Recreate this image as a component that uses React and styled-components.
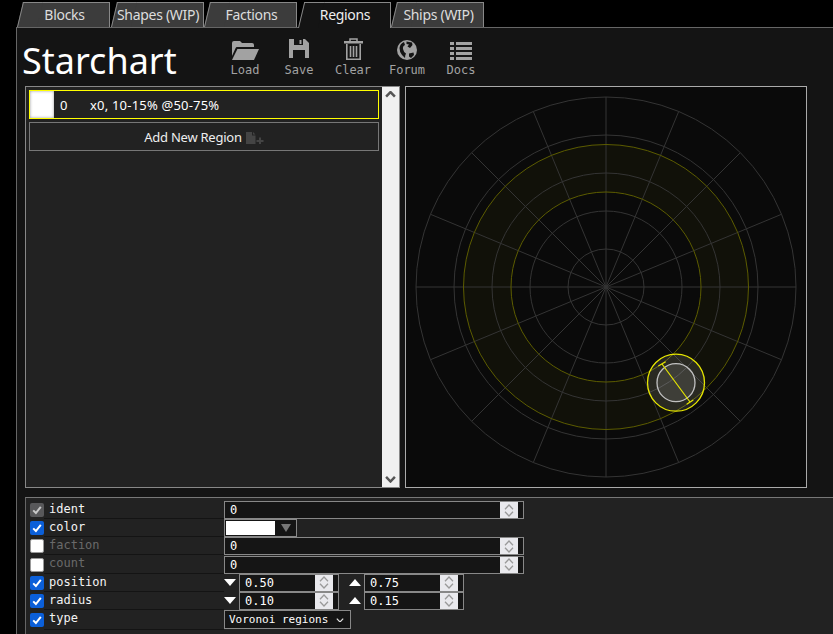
import React from "react";
import styled, { createGlobalStyle } from "styled-components";

const GlobalStyle = createGlobalStyle`
  html, body { margin: 0; padding: 0; background: #000; overflow: hidden; }
  body { font-family: "Noto Sans", "Open Sans", sans-serif; }
`;

const MONO = `"DejaVu Sans Mono", "Liberation Mono", monospace`;

const Page = styled.div`
  width: 833px;
  height: 634px;
  overflow: hidden;
  background: #000;
`;

const TabBar = styled.div`
  display: flex;
  height: 27px;
  padding: 2px 0 0 16.5px;
  box-sizing: border-box;
`;

const Tab = styled.div`
  position: relative;
  isolation: isolate;
  width: 87px;
  height: ${(p) => (p.$active ? "26px" : "25px")};
  margin-left: 6.5px;
  padding-right: 3px;
  box-sizing: border-box;
  border-top: 1px solid #888;
  border-right: 1px solid #888;
  background: ${(p) => (p.$active ? "#141414" : "#3c3c3c")};
  color: ${(p) => (p.$active ? "#eee" : "#ddd")};
  font-size: 14px;
  letter-spacing: -0.3px;
  line-height: 24px;
  text-align: center;
  white-space: nowrap;
  z-index: ${(p) => (p.$active ? 2 : 0)};

  &::before {
    content: "";
    position: absolute;
    z-index: -1;
    top: -1px;
    bottom: 0;
    left: -6px;
    width: 20px;
    box-sizing: border-box;
    border-top: 1px solid #888;
    border-left: 1px solid #888;
    background: inherit;
    transform-origin: bottom left;
    transform: skewX(-13.5deg);
  }
`;

const Frame = styled.div`
  position: relative;
  height: 607px;
  margin-left: 16px;
  box-sizing: border-box;
  border-top: 1px solid #666;
  border-left: 1px solid #666;
  background: #141414;
`;

const Header = styled.div`
  display: flex;
  height: 58px;
  padding-left: 5px;
`;

const Title = styled.h1`
  width: 196px;
  margin: 0;
  color: #fff;
  font-size: 36px;
  font-weight: 400;
  line-height: 66px;
`;

const Toolbar = styled.div`
  display: flex;
  padding-top: 9px;
`;

const ToolButton = styled.div`
  width: 54px;
  display: flex;
  flex-direction: column;
  align-items: center;
  color: #a2a2a2;
  font-family: ${MONO};
  font-size: 12px;
  line-height: 14px;
`;

const IconSlot = styled.div`
  height: 23px;
  margin-bottom: 3px;
  display: flex;
  align-items: flex-end;

  svg { display: block; }
`;

const Main = styled.div`
  display: flex;
  gap: 5px;
  padding-left: 8px;
`;

const ListPanel = styled.div`
  width: 375px;
  height: 402px;
  box-sizing: border-box;
  display: flex;
  border: 1px solid #888;
  background: #222;
`;

const List = styled.div`
  flex: 1;
  display: flex;
  flex-direction: column;
  gap: 3px;
  padding: 3px 3px 0 3px;
`;

const RegionRow = styled.div`
  height: 29px;
  box-sizing: border-box;
  display: flex;
  align-items: center;
  border: 1px solid #ff0;
  color: #fff;
  font-size: 13px;
  letter-spacing: 0.2px;
`;

const Swatch = styled.div`
  width: 24px;
  height: 100%;
  background: #fff;
  box-shadow: inset 0 0 3px #999;
`;

const RegionIdent = styled.span`
  width: 36px;
  padding-left: 6px;
  box-sizing: border-box;
`;

const AddButton = styled.div`
  height: 29px;
  box-sizing: border-box;
  display: flex;
  align-items: center;
  justify-content: center;
  gap: 4px;
  border: 1px solid #777;
  color: #eee;
  font-size: 13px;
  letter-spacing: -0.25px;
`;

const Scrollbar = styled.div`
  width: 17px;
  display: flex;
  flex-direction: column;
  justify-content: space-between;
  align-items: center;
  padding: 4px 0;
  box-sizing: border-box;
  background: #f0f0f0;
`;

const ChartBox = styled.div`
  width: 402px;
  height: 402px;
  box-sizing: border-box;
  border: 1px solid #aaa;
  background: #0a0a0a;

  svg { display: block; }
`;

const PropPanel = styled.div`
  height: 138px;
  margin: 9px 0 0 8px;
  box-sizing: border-box;
  border-top: 1px solid #777;
  border-left: 1px solid #666;
  background: #222;
`;

const PropList = styled.div`
  width: 498px;
  padding: 3px 0 4px;
  border-bottom: 1px solid #333;
`;

const PropRow = styled.div`
  display: flex;
  align-items: center;
  height: ${(p) => (p.$tall ? "20px" : "18.17px")};
`;

const Check = styled.span`
  flex: none;
  width: 14px;
  height: 14px;
  margin-left: 4px;
  box-sizing: border-box;
  border-radius: 2px;
  display: flex;
  align-items: center;
  justify-content: center;
  background: ${(p) =>
    p.$state === "on" ? "#0b5fd9" : p.$state === "locked" ? "#58585a" : "#fff"};
  border: ${(p) => (p.$state === "off" ? "1px solid #999" : "none")};
  color: ${(p) => (p.$state === "locked" ? "#c8c8c8" : "#fff")};
`;

const Label = styled.div`
  flex: none;
  width: 180px;
  height: 100%;
  padding-left: 5px;
  box-sizing: border-box;
  border-bottom: 1px solid #141414;
  color: ${(p) => (p.$off ? "#6a6a6a" : "#f4f4f4")};
  font-family: ${MONO};
  font-size: 12px;
  line-height: 17px;
`;

const Field = styled.div`
  flex: none;
  width: ${(p) => p.$width}px;
  height: 18px;
  box-sizing: border-box;
  display: flex;
  border: 1px solid #888;
  background: #151515;
  padding-right: 5px;
`;

const FieldInput = styled.input`
  flex: 1;
  min-width: 0;
  padding: 0 0 0 5px;
  border: none;
  outline: none;
  background: transparent;
  color: #fff;
  font-family: ${MONO};
  font-size: 12px;
`;

const Spinner = styled.div`
  flex: none;
  width: 18px;
  display: flex;
  flex-direction: column;
  align-items: center;
  justify-content: center;
  gap: 1px;
  background: #e9e9ed;
`;

const RangeRow = styled.div`
  display: flex;
  align-items: center;
`;

const Arrow = styled.span`
  flex: none;
  width: 0;
  height: 0;
  margin-left: ${(p) => (p.$up ? "10px" : "0")};
  margin-right: 3px;
  border-left: 6px solid transparent;
  border-right: 6px solid transparent;
  border-top: ${(p) => (p.$up ? "none" : "7px solid #fff")};
  border-bottom: ${(p) => (p.$up ? "7px solid #fff" : "none")};
`;

const ColorField = styled.div`
  flex: none;
  width: 73px;
  height: 18px;
  box-sizing: border-box;
  display: flex;
  border: 1px solid #888;
  background: #151515;
`;

const ColorChip = styled.div`
  width: 49px;
  margin: 1px;
  background: #fff;
`;

const ColorCaret = styled.div`
  flex: 1;
  display: flex;
  align-items: center;
  justify-content: center;

  &::before {
    content: "";
    border-left: 5px solid transparent;
    border-right: 5px solid transparent;
    border-top: 8px solid #777;
  }
`;

const SelectBox = styled.div`
  flex: none;
  width: 127px;
  height: 19px;
  box-sizing: border-box;
  display: flex;
  align-items: center;
  justify-content: space-between;
  padding: 0 6px 0 4px;
  border: 1px solid #888;
  background: #151515;
  color: #fff;
  font-family: ${MONO};
  font-size: 11px;
`;

const Chevron = ({ dir = "up", w = 8, color = "#999", sw = 1 }) => (
  <svg width={w} height={w * 0.6} viewBox="0 0 10 6" style={{ display: "block" }}>
    <path
      d={dir === "up" ? "M1 5.2 L5 1 L9 5.2" : "M1 .8 L5 5 L9 .8"}
      fill="none"
      stroke={color}
      strokeWidth={sw * 1.25}
    />
  </svg>
);

const SpinField = ({ width, value }) => (
  <Field $width={width}>
    <FieldInput defaultValue={value} readOnly />
    <Spinner>
      <Chevron dir="up" w={10} />
      <Chevron dir="down" w={10} />
    </Spinner>
  </Field>
);

const CheckBox = ({ state }) => (
  <Check $state={state}>
    {state !== "off" && (
      <svg width="10" height="10" viewBox="0 0 10 10">
        <path d="M1.2 5.4 L3.9 8 L8.8 1.8" fill="none" stroke="currentColor" strokeWidth="2" />
      </svg>
    )}
  </Check>
);

const LoadIcon = () => (
  <svg viewBox="0 0 27 19" width="27" height="19">
    <path fill="currentColor" d="M0 15 V2 Q0 0 2 0 H8 L10 2 H20 Q22 2 22 4 V6 H5 Q4 6 3.4 7.4z" />
    <path fill="currentColor" d="M5.4 8 H27 L22 19 H0z" />
  </svg>
);

const SaveIcon = () => (
  <svg viewBox="0 0 20 21" width="20" height="21">
    <path
      fill="currentColor"
      fillRule="evenodd"
      d="M0 0 H16 L20 4 V19 H0z M5 0 V6 H14 V0z M4 11 V19 H16 V11z"
    />
    <rect x="10.5" y="1" width="2" height="4" fill="currentColor" />
  </svg>
);

const TrashIcon = () => (
  <svg viewBox="0 0 19 22" width="19" height="22">
    <path fill="none" stroke="currentColor" strokeWidth="1.5" d="M6 3.5 V1 H13 V3.5" />
    <rect x="0" y="3" width="19" height="2.5" fill="currentColor" />
    <path
      fill="none"
      stroke="currentColor"
      strokeWidth="1.6"
      d="M2.8 6 V21.2 H16.2 V6 M6.5 8 V19 M9.5 8 V19 M12.5 8 V19"
    />
  </svg>
);

const GlobeIcon = () => (
  <svg viewBox="0 0 20 20" width="20" height="20">
    <circle cx="10" cy="10" r="10" fill="currentColor" />
    <path fill="#141414" d="M7 2 Q3 3.5 2.5 8 Q2.5 12 5 15 Q7 17 8 18 Q8 15 9 13.5 Q6.5 12 6 9 Q5.5 6 8 5z" />
    <path fill="#141414" d="M9.5 1.5 L15 2.5 L15.5 5 L13 8 L10.5 6.5 L12 4.5 L9.5 4z" />
    <path fill="#141414" d="M12 13.5 L16.5 12.5 L17 15 L14 18 L12 16.5z" />
  </svg>
);

const DocsIcon = () => (
  <svg viewBox="0 0 22 18" width="22" height="18">
    {[0, 5, 10, 15].map((y) => (
      <g key={y} fill="currentColor">
        <rect x="0" y={y} width="4" height="3" />
        <rect x="6" y={y} width="16" height="3" />
      </g>
    ))}
  </svg>
);

const NewFileIcon = () => (
  <svg width="18" height="12" viewBox="0 0 18 12" style={{ display: "block", marginTop: 2 }}>
    <path fill="#444" d="M0 0 H6 V3.5 H9.5 V12 H0z M7 0 L9.5 2.5 H7z" />
    <path fill="#444" d="M13 5.5 H15 V8 H17.5 V10 H15 V12 H13 V10 H10.5 V8 H13z" />
  </svg>
);

const RING_RADII = [38, 76, 114, 152, 190];
const SPOKES = Array.from({ length: 16 }, (_, i) => (i * Math.PI) / 8);

const Chart = () => (
  <svg width="400" height="400" viewBox="0 0 400 400">
    <circle cx="200" cy="200" r="118.75" fill="none" stroke="#ffff00" strokeOpacity="0.032" strokeWidth="47.5" />
    <g fill="none" stroke="#343434">
      {RING_RADII.map((r) => (
        <circle key={r} cx="200" cy="200" r={r} />
      ))}
      {SPOKES.map((a) => (
        <line
          key={a}
          x1="200"
          y1="200"
          x2={200 + 190 * Math.cos(a)}
          y2={200 + 190 * Math.sin(a)}
        />
      ))}
    </g>
    <g fill="none" stroke="#5c5c00">
      <circle cx="200" cy="200" r="95" />
      <circle cx="200" cy="200" r="142.5" />
    </g>
    <circle cx="270" cy="295.7" r="28.5" fill="#fff" fillOpacity="0.1" stroke="#e6e600" strokeWidth="1.3" />
    <circle cx="270" cy="295.7" r="19" fill="#fff" fillOpacity="0.1" stroke="#c0c0c0" strokeWidth="1.3" />
    <g stroke="#e6e600" strokeWidth="1.2">
      <line x1="256" y1="277" x2="284" y2="315" />
      <line x1="252.3" y1="279" x2="259.7" y2="274.7" />
      <line x1="280.7" y1="317.3" x2="287.3" y2="313" />
    </g>
  </svg>
);

const TABS = ["Blocks", "Shapes (WIP)", "Factions", "Regions", "Ships (WIP)"];

const TOOLS = [
  { label: "Load", Icon: LoadIcon },
  { label: "Save", Icon: SaveIcon },
  { label: "Clear", Icon: TrashIcon },
  { label: "Forum", Icon: GlobeIcon },
  { label: "Docs", Icon: DocsIcon },
];

export default function App() {
  return (
    <Page>
      <GlobalStyle />
      <TabBar>
        {TABS.map((t) => (
          <Tab key={t} $active={t === "Regions"}>
            {t}
          </Tab>
        ))}
      </TabBar>
      <Frame>
        <Header>
          <Title>Starchart</Title>
          <Toolbar>
            {TOOLS.map(({ label, Icon }) => (
              <ToolButton key={label}>
                <IconSlot>
                  <Icon />
                </IconSlot>
                {label}
              </ToolButton>
            ))}
          </Toolbar>
        </Header>
        <Main>
          <ListPanel>
            <List>
              <RegionRow>
                <Swatch />
                <RegionIdent>0</RegionIdent>
                <span>x0, 10-15% @50-75%</span>
              </RegionRow>
              <AddButton>
                Add New Region
                <NewFileIcon />
              </AddButton>
            </List>
            <Scrollbar>
              <Chevron dir="up" w={11} color="#555" sw={1.8} />
              <Chevron dir="down" w={11} color="#555" sw={1.8} />
            </Scrollbar>
          </ListPanel>
          <ChartBox>
            <Chart />
          </ChartBox>
        </Main>
        <PropPanel>
          <PropList>
            <PropRow>
              <CheckBox state="locked" />
              <Label>ident</Label>
              <SpinField width={300} value="0" />
            </PropRow>
            <PropRow>
              <CheckBox state="on" />
              <Label>color</Label>
              <ColorField>
                <ColorChip />
                <ColorCaret />
              </ColorField>
            </PropRow>
            <PropRow>
              <CheckBox state="off" />
              <Label $off>faction</Label>
              <SpinField width={300} value="0" />
            </PropRow>
            <PropRow>
              <CheckBox state="off" />
              <Label $off>count</Label>
              <SpinField width={300} value="0" />
            </PropRow>
            <PropRow>
              <CheckBox state="on" />
              <Label>position</Label>
              <RangeRow>
                <Arrow />
                <SpinField width={100} value="0.50" />
                <Arrow $up />
                <SpinField width={100} value="0.75" />
              </RangeRow>
            </PropRow>
            <PropRow>
              <CheckBox state="on" />
              <Label>radius</Label>
              <RangeRow>
                <Arrow />
                <SpinField width={100} value="0.10" />
                <Arrow $up />
                <SpinField width={100} value="0.15" />
              </RangeRow>
            </PropRow>
            <PropRow $tall>
              <CheckBox state="on" />
              <Label>type</Label>
              <SelectBox>
                Voronoi regions
                <Chevron dir="down" w={8} color="#ddd" sw={1.2} />
              </SelectBox>
            </PropRow>
          </PropList>
        </PropPanel>
      </Frame>
    </Page>
  );
}
